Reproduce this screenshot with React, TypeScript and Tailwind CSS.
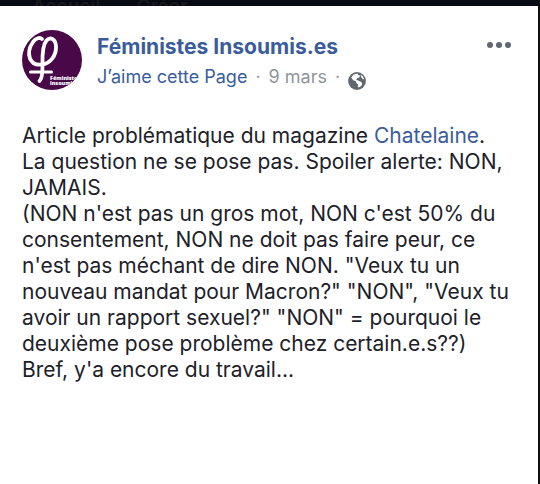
function Avatar() {
  return (
    <svg viewBox="0 0 60 60" className="size-15 shrink-0" role="img" aria-label="Féministes Insoumis.es">
      <defs>
        <clipPath id="avatar-clip">
          <circle cx="30" cy="30" r="30" />
        </clipPath>
      </defs>
      <g clipPath="url(#avatar-clip)">
        <rect width="60" height="60" fill="#490847" />
        <path
          d="M20 9C18 7 14 8 11 12C7.500 17 6 23 8 28.500C10 33.500 15 35.200 20 34.500C28.500 33.500 34.500 25 34 16.500C33.700 9.500 28.500 6 24.500 10.500C19.500 16.500 20.500 30 20.500 36C20.500 43 20 49 17.500 51"
          fill="none"
          stroke="#fff"
          strokeWidth="3.800"
          strokeLinecap="round"
          strokeLinejoin="round"
        />
        <path d="M8.500 42H29.500" stroke="#fff" strokeWidth="3" strokeLinecap="round" />
        <g fill="#fff" fontFamily="Open Sans, sans-serif" fontSize="5.400" fontWeight="800">
          <text x="28" y="50">Féministes</text>
          <text x="28" y="55">insoumis.es</text>
        </g>
      </g>
    </svg>
  );
}

function Globe() {
  return (
    <svg viewBox="0 0 18 18" className="size-[18px] self-end" role="img" aria-label="Public">
      <circle cx="9" cy="9" r="8.900" fill="#606770" />
      <path
        d="M5.600 2.400L9.800 1.500L10 3L12 3.600L11.300 5.400L9 6.300L8.300 7.700L10.600 8.700L13.300 10L14.300 12.200L12.600 14.600L10.700 15.500L9.700 14.500L10.100 12.500L8.300 11L7.900 9.300L5.600 8.400L4.200 6.900L3.300 5.600Z"
        fill="#fff"
      />
      <path d="M12.300 2.400L14.800 4.200L16.200 7.200L14.600 7L13.400 5.400L12.900 4Z" fill="#fff" />
    </svg>
  );
}

export default function App() {
  return (
    <div className="min-h-screen flex flex-col border-r-2 border-[#0e0e10] bg-white font-[Inter,sans-serif]">
      <nav className="flex h-1.5 items-start gap-9 overflow-hidden bg-[#070a12] pl-8 text-[19px]/[14px] font-semibold text-[#18191c]">
        <a href="#accueil">Accueil</a>
        <a href="#creer">Créer</a>
      </nav>

      <article className="px-[22px] pt-6">
        <header className="flex gap-[15px]">
          <Avatar />
          <div className="min-w-0 flex-1 pt-1">
            <h1 className="text-[21px]/[26px] font-bold text-[#3a5c9c]">
              <a href="#page">Féministes Insoumis.es</a>
            </h1>
            <p className="mt-1 flex items-center gap-2 text-[18px]/[26px] text-[#90949c]">
              <a href="#like" className="text-[#3a5c9c]">J’aime cette Page</a>
              <span>·</span>
              <a href="#date">9 mars</a>
              <span>·</span>
              <Globe />
            </p>
          </div>
          <button type="button" aria-label="Plus d’options" className="flex h-[30px] items-center gap-[3px] pr-[5px]">
            <span className="size-1.5 rounded-full bg-[#606770]" />
            <span className="size-1.5 rounded-full bg-[#606770]" />
            <span className="size-1.5 rounded-full bg-[#606770]" />
          </button>
        </header>

        <div className="mt-[33px] text-[21px]/[26px] text-[#1d2129]">
          <p>
            Article problématique du magazine <a href="#chatelaine" className="text-[#3a5c9c]">Chatelaine</a>.<br />
            La question ne se pose pas. Spoiler alerte: NON,<br />
            JAMAIS.<br />
            (NON n'est pas un gros mot, NON c'est 50% du<br />
            consentement, NON ne doit pas faire peur, ce<br />
            n'est pas méchant de dire NON. "Veux tu un<br />
            nouveau mandat pour Macron?" "NON", "Veux tu<br />
            avoir un rapport sexuel?" "NON" = pourquoi le<br />
            deuxième pose problème chez certain.e.s??)<br />
            Bref, y'a encore du travail...
          </p>
        </div>
      </article>
    </div>
  );
}
